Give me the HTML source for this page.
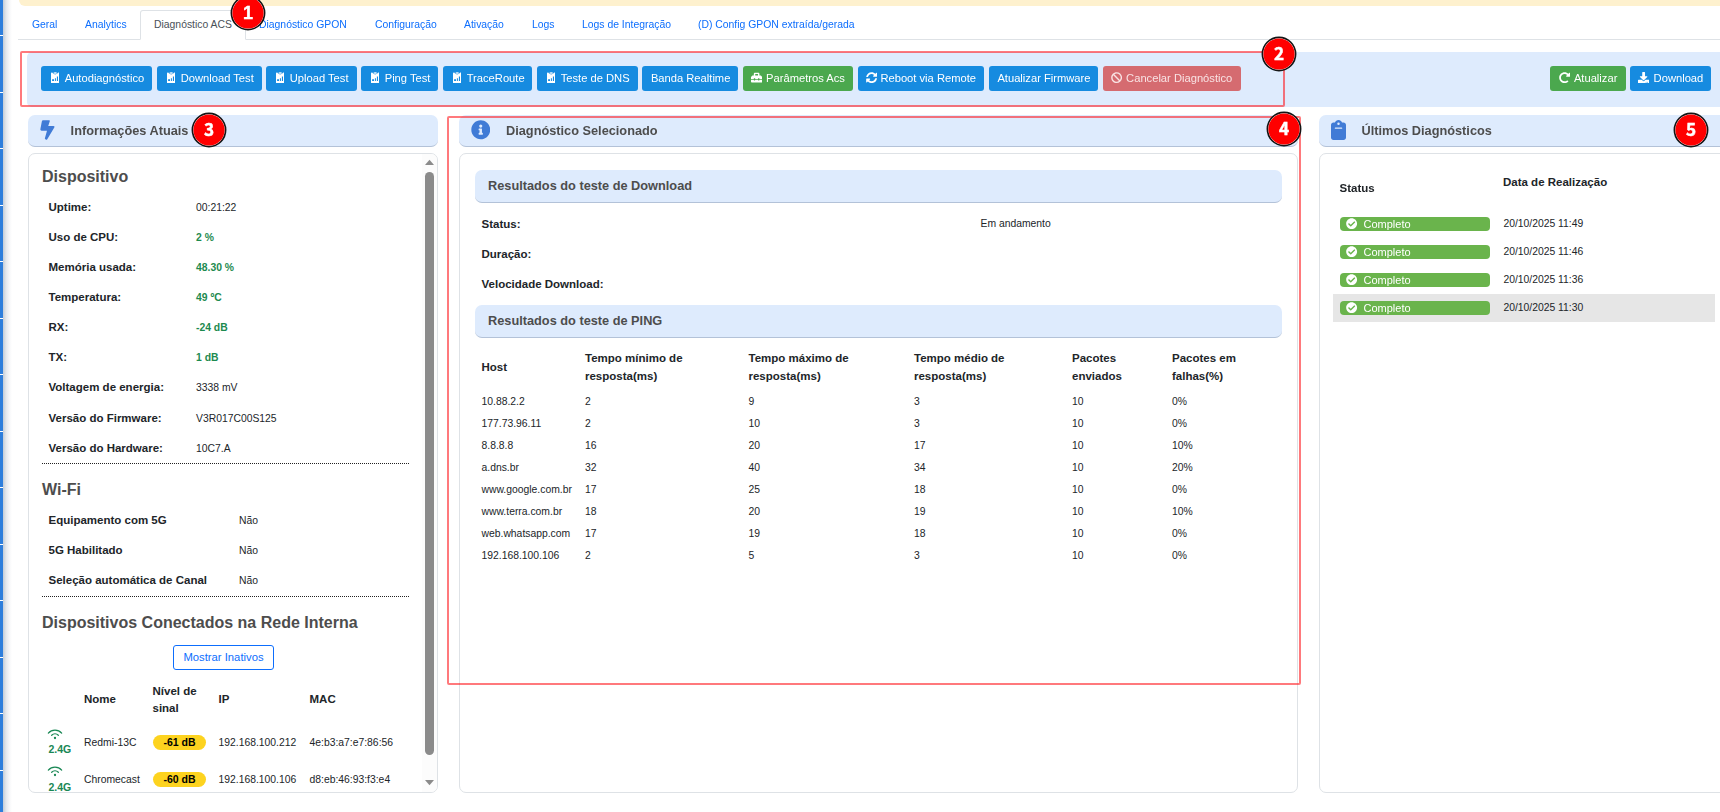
<!DOCTYPE html>
<html lang="pt-BR">
<head>
<meta charset="utf-8">
<title>Diagnóstico ACS</title>
<style>
*{box-sizing:border-box;margin:0;padding:0}
html,body{width:1720px;height:812px;overflow:hidden;background:#fff}
body{position:relative;font-family:"Liberation Sans",Arial,sans-serif;font-size:10.5px;color:#212529}
.abs{position:absolute}
.ph,.btn,.cb,.gs{will-change:transform}
/* left strip */
#strip{left:0;top:0;width:3px;height:812px;background:#2d7edc}
#strip i{position:absolute;left:0;width:3px;height:1px;background:#fff}
#stripsh{left:3px;top:0;width:9px;height:812px;background:linear-gradient(90deg,#c3ccd7 0,#e4e8ed 35%,#f6f7f9 70%,#fff 100%)}
#yellow{left:18.6px;top:0;width:1702px;height:5.6px;background:#fef1ce;border-bottom-left-radius:6px}
/* tabs */
#tabline{left:18px;top:39px;width:1702px;height:1px;background:#dee2e6}
.tab{position:absolute;top:18px;height:13px;line-height:13px;font-size:10.4px;color:#0d6efd;white-space:nowrap}
#tabact{left:140px;top:10px;width:106px;height:30px;border:1px solid #dee2e6;border-bottom:1px solid #fff;border-radius:3px 3px 0 0;background:#fff}
/* toolbar */
#toolbar{left:27px;top:52px;width:1700px;height:55px;background:#deebfd;border-radius:5px}
.btn{position:absolute;top:66px;height:25px;border-radius:3px;color:#fff;font-size:11.18px;line-height:25px;white-space:nowrap}
.btn span{position:absolute;top:0}
.btn svg{position:absolute}
.b{background:#168be0}.g{background:#4ba84e}.r{background:#d56b70;color:#f9e3e4}
.outline{border:2px solid rgba(255,20,25,.57);border-radius:2px;position:absolute}
/* number badges */
/* panel headers */
.ph{position:absolute;top:115px;height:32px;background:#deebfd;border-radius:7px;border-bottom:1.5px solid #b3c2d8;font-weight:700;font-size:12.75px;color:#4d4d4d;line-height:31px}
.ph span{position:absolute;top:0;white-space:nowrap}
.card{position:absolute;top:153px;height:640px;border:1px solid #dee2e6;border-radius:7px;background:#fff}
h4{position:absolute;font-size:16px;font-weight:700;color:#4d4d4d;line-height:20px;white-space:nowrap}
.lb{position:absolute;font-weight:700;font-size:11.5px;line-height:14px;white-space:nowrap;color:#212529}
.vl{position:absolute;margin-top:1px;font-size:10.37px;line-height:14px;white-space:nowrap;color:#212529}
.gr{color:#1d8a4f;font-weight:700}
.sh{position:absolute;left:475px;width:807px;height:33px;background:#deebfd;border-radius:7px;border-bottom:1.5px solid #b3c2d8;font-weight:700;font-size:12.75px;color:#4d4d4d;line-height:31px}
.sh span{position:absolute;left:13px;top:0;white-space:nowrap}
.cb{position:absolute;left:1340px;width:150px;height:14px;border-radius:4px;background:#6ab44c;color:#fff;font-size:11px;line-height:14px}
.cb span{position:absolute;left:23.5px;top:0}
.dot{position:absolute;left:42px;width:367px;height:0;border-top:1px dotted #222}
</style>
</head>
<body>
<div id="strip" class="abs"><i style="top:35px"></i><i style="top:92px"></i><i style="top:148px"></i><i style="top:205px"></i><i style="top:261px"></i><i style="top:318px"></i><i style="top:374px"></i><i style="top:431px"></i><i style="top:487px"></i><i style="top:544px"></i><i style="top:600px"></i><i style="top:657px"></i><i style="top:713px"></i><i style="top:770px"></i></div>
<div id="stripsh" class="abs"></div>
<div id="yellow" class="abs"></div>

<!-- tabs -->
<div id="tabline" class="abs"></div>
<div id="tabact" class="abs"></div>
<div class="tab gs" style="left:31.5px">Geral</div>
<div class="tab gs" style="left:84.5px">Analytics</div>
<div class="tab" style="left:154px;color:#495057">Diagnóstico ACS</div>
<div class="tab gs" style="left:259px">Diagnóstico GPON</div>
<div class="tab gs" style="left:374.5px">Configuração</div>
<div class="tab gs" style="left:464px">Ativação</div>
<div class="tab gs" style="left:531.5px">Logs</div>
<div class="tab gs" style="left:581.5px">Logs de Integração</div>
<div class="tab gs" style="left:698px">(D) Config GPON extraída/gerada</div>

<!-- toolbar -->
<div id="toolbar" class="abs"></div>
<div class="btn b" style="left:41px;width:111px"><svg style="left:10.00px;top:5.60px" width="8.4" height="11.4" viewBox="0 0 8.4 11.4" fill="#fff"><path fill-rule="evenodd" d="M0 1.400Q0 0.600 0.800 0.600H1.300Q1.700 2.400 4.200 2.400Q6.700 2.400 7.100 0.600H7.600Q8.400 0.600 8.400 1.400V10.600Q8.400 11.400 7.600 11.400H0.800Q0 11.400 0 10.600ZM1.100 7.300H3V9H1.100ZM3.900 6.200H4.900V9H3.900ZM5.900 4.400H7V9H5.900Z"/><ellipse cx="4.2" cy="0.950" rx="1.800" ry="0.800"/><path d="M1.500 0.900Q4.200 3.200 6.900 0.900Q6.700 2.300 4.200 2.300Q1.700 2.300 1.500 0.900Z" opacity="0.550"/></svg><span style="left:23.70px">Autodiagnóstico</span></div>
<div class="btn b" style="left:157px;width:104.5px"><svg style="left:10.00px;top:5.60px" width="8.4" height="11.4" viewBox="0 0 8.4 11.4" fill="#fff"><path fill-rule="evenodd" d="M0 1.400Q0 0.600 0.800 0.600H1.300Q1.700 2.400 4.200 2.400Q6.700 2.400 7.100 0.600H7.600Q8.400 0.600 8.400 1.400V10.600Q8.400 11.400 7.600 11.400H0.800Q0 11.400 0 10.600ZM1.100 7.300H3V9H1.100ZM3.900 6.200H4.900V9H3.900ZM5.900 4.400H7V9H5.900Z"/><ellipse cx="4.2" cy="0.950" rx="1.800" ry="0.800"/><path d="M1.500 0.900Q4.200 3.200 6.900 0.900Q6.700 2.300 4.200 2.300Q1.700 2.300 1.500 0.900Z" opacity="0.550"/></svg><span style="left:23.70px">Download Test</span></div>
<div class="btn b" style="left:266px;width:90.5px"><svg style="left:10.00px;top:5.60px" width="8.4" height="11.4" viewBox="0 0 8.4 11.4" fill="#fff"><path fill-rule="evenodd" d="M0 1.400Q0 0.600 0.800 0.600H1.300Q1.700 2.400 4.200 2.400Q6.700 2.400 7.100 0.600H7.600Q8.400 0.600 8.400 1.400V10.600Q8.400 11.400 7.600 11.400H0.800Q0 11.400 0 10.600ZM1.100 7.300H3V9H1.100ZM3.900 6.200H4.900V9H3.900ZM5.900 4.400H7V9H5.900Z"/><ellipse cx="4.2" cy="0.950" rx="1.800" ry="0.800"/><path d="M1.500 0.900Q4.200 3.200 6.900 0.900Q6.700 2.300 4.200 2.300Q1.700 2.300 1.500 0.900Z" opacity="0.550"/></svg><span style="left:23.70px">Upload Test</span></div>
<div class="btn b" style="left:361px;width:77px"><svg style="left:10.00px;top:5.60px" width="8.4" height="11.4" viewBox="0 0 8.4 11.4" fill="#fff"><path fill-rule="evenodd" d="M0 1.400Q0 0.600 0.800 0.600H1.300Q1.700 2.400 4.200 2.400Q6.700 2.400 7.100 0.600H7.600Q8.400 0.600 8.400 1.400V10.600Q8.400 11.400 7.600 11.400H0.800Q0 11.400 0 10.600ZM1.100 7.300H3V9H1.100ZM3.900 6.200H4.900V9H3.900ZM5.900 4.400H7V9H5.900Z"/><ellipse cx="4.2" cy="0.950" rx="1.800" ry="0.800"/><path d="M1.500 0.900Q4.200 3.200 6.900 0.900Q6.700 2.300 4.200 2.300Q1.700 2.300 1.500 0.900Z" opacity="0.550"/></svg><span style="left:23.70px">Ping Test</span></div>
<div class="btn b" style="left:443px;width:89px"><svg style="left:10.00px;top:5.60px" width="8.4" height="11.4" viewBox="0 0 8.4 11.4" fill="#fff"><path fill-rule="evenodd" d="M0 1.400Q0 0.600 0.800 0.600H1.300Q1.700 2.400 4.200 2.400Q6.700 2.400 7.100 0.600H7.600Q8.400 0.600 8.400 1.400V10.600Q8.400 11.400 7.600 11.400H0.800Q0 11.400 0 10.600ZM1.100 7.300H3V9H1.100ZM3.900 6.200H4.900V9H3.900ZM5.900 4.400H7V9H5.900Z"/><ellipse cx="4.2" cy="0.950" rx="1.800" ry="0.800"/><path d="M1.500 0.900Q4.200 3.200 6.900 0.900Q6.700 2.300 4.200 2.300Q1.700 2.300 1.500 0.900Z" opacity="0.550"/></svg><span style="left:23.70px">TraceRoute</span></div>
<div class="btn b" style="left:537px;width:101px"><svg style="left:10.00px;top:5.60px" width="8.4" height="11.4" viewBox="0 0 8.4 11.4" fill="#fff"><path fill-rule="evenodd" d="M0 1.400Q0 0.600 0.800 0.600H1.300Q1.700 2.400 4.200 2.400Q6.700 2.400 7.100 0.600H7.600Q8.400 0.600 8.400 1.400V10.600Q8.400 11.400 7.600 11.400H0.800Q0 11.400 0 10.600ZM1.100 7.300H3V9H1.100ZM3.900 6.200H4.900V9H3.900ZM5.900 4.400H7V9H5.900Z"/><ellipse cx="4.2" cy="0.950" rx="1.800" ry="0.800"/><path d="M1.500 0.900Q4.200 3.200 6.900 0.900Q6.700 2.300 4.200 2.300Q1.700 2.300 1.500 0.900Z" opacity="0.550"/></svg><span style="left:23.70px">Teste de DNS</span></div>
<div class="btn b" style="left:642px;width:96px"><span style="left:8.90px">Banda Realtime</span></div>
<div class="btn g" style="left:743px;width:110px"><svg style="left:7.50px;top:6.00px" width="11.25" height="11.25" viewBox="0 0 512 512" fill="#fff"><path d="M502.63 214.63l-45.250-45.250c-6-6-14.140-9.370-22.630-9.370H384V80c0-26.510-21.490-48-48-48H176c-26.510 0-48 21.490-48 48v80H77.250c-8.490 0-16.620 3.370-22.630 9.370L9.370 214.630c-6 6-9.370 14.140-9.370 22.630V320h128v-16c0-8.840 7.160-16 16-16h32c8.840 0 16 7.160 16 16v16h128v-16c0-8.840 7.160-16 16-16h32c8.840 0 16 7.160 16 16v16h128v-82.750c0-8.480-3.370-16.620-9.370-22.620zM320 160H192V96h128v64zm64 208c0 8.840-7.160 16-16 16h-32c-8.840 0-16-7.160-16-16v-16H192v16c0 8.840-7.160 16-16 16h-32c-8.840 0-16-7.160-16-16v-16H0v96c0 17.670 14.330 32 32 32h448c17.670 0 32-14.330 32-32v-96H384v16z"/></svg><span style="left:23.10px">Parâmetros Acs</span></div>
<div class="btn b" style="left:858px;width:126px"><svg style="left:7.70px;top:5.90px" width="11.25" height="11.25" viewBox="0 0 512 512" fill="#fff"><path d="M370.72 133.28C339.458 104.008 298.888 87.962 255.848 88c-77.458.068-144.328 53.178-162.791 126.850-1.344 5.363-6.122 9.150-11.651 9.150H24.103c-7.498 0-13.194-6.807-11.807-14.176C33.933 94.924 134.813 8 256 8c66.448 0 126.791 26.136 171.315 68.685L463.030 40.970C478.149 25.851 504 36.559 504 57.941V192c0 13.255-10.745 24-24 24H345.941c-21.382 0-32.090-25.851-16.971-40.971l41.750-41.749zM32 296h134.059c21.382 0 32.090 25.851 16.971 40.971l-41.750 41.750c31.262 29.273 71.835 45.319 114.876 45.280 77.418-.070 144.315-53.144 162.787-126.849 1.344-5.363 6.122-9.150 11.651-9.150h57.304c7.498 0 13.194 6.807 11.807 14.176C478.067 417.076 377.187 504 256 504c-66.448 0-126.791-26.136-171.315-68.685L48.970 471.030C33.851 486.149 8 475.441 8 454.059V320c0-13.255 10.745-24 24-24z"/></svg><span style="left:22.40px">Reboot via Remote</span></div>
<div class="btn b" style="left:989px;width:109px"><span style="left:8.40px">Atualizar Firmware</span></div>
<div class="btn r" style="left:1103px;width:138px"><svg style="left:7.50px;top:6.30px" width="11.25" height="11.25" viewBox="0 0 512 512" fill="#f9e3e4"><path d="M256 8C119.034 8 8 119.033 8 256s111.034 248 248 248 248-111.034 248-248S392.967 8 256 8zm130.108 117.892c65.448 65.448 70 165.481 20.677 235.637L150.470 105.216c70.204-49.356 170.226-44.735 235.638 20.676zM125.892 386.108c-65.448-65.448-70-165.481-20.677-235.637L361.530 406.784c-70.203 49.356-170.226 44.736-235.638-20.676z"/></svg><span style="left:23.10px">Cancelar Diagnóstico</span></div>
<div class="btn g" style="left:1550px;width:75.7px"><svg style="left:8.70px;top:6.30px" width="11.25" height="11.25" viewBox="0 0 512 512" fill="#fff"><path d="M256.455 8c66.269.119 126.437 26.233 170.859 68.685l35.715-35.715C478.149 25.851 504 36.559 504 57.941V192c0 13.255-10.745 24-24 24H345.941c-21.382 0-32.090-25.851-16.971-40.971l41.750-41.750c-30.864-28.899-70.801-44.907-113.230-45.273-92.398-.798-170.283 73.977-169.484 169.442C88.764 348.009 162.184 424 256 424c41.127 0 79.997-14.678 110.629-41.556 4.743-4.161 11.906-3.908 16.368.553l39.662 39.662c4.872 4.872 4.631 12.815-.482 17.433C378.202 479.813 319.926 504 256 504 119.034 504 8.001 392.967 8 256.002 7.999 119.193 119.646 7.755 256.455 8z"/></svg><span style="left:23.90px">Atualizar</span></div>
<div class="btn b" style="left:1630px;width:81px"><svg style="left:8.00px;top:6.00px" width="11.25" height="11.25" viewBox="0 0 512 512" fill="#fff"><path d="M216 0h80c13.300 0 24 10.700 24 24v168h87.700c17.800 0 26.700 21.500 14.100 34.100L269.700 378.300c-7.500 7.500-19.800 7.500-27.300 0L90.100 226.100c-12.600-12.600-3.700-34.100 14.100-34.100H192V24c0-13.300 10.700-24 24-24zm296 376v112c0 13.300-10.700 24-24 24H24c-13.300 0-24-10.700-24-24V376c0-13.300 10.700-24 24-24h146.700l49 49c20.100 20.100 52.500 20.100 72.600 0l49-49H488c13.300 0 24 10.700 24 24zm-124 88c0-11-9-20-20-20s-20 9-20 20 9 20 20 20 20-9 20-20zm64 0c0-11-9-20-20-20s-20 9-20 20 9 20 20 20 20-9 20-20z"/></svg><span style="left:23.60px">Download</span></div>

<!-- panel headers -->
<div class="ph" style="left:28px;width:410px"><span style="left:42.6px">Informações Atuais</span></div>
<div class="ph" style="left:459px;width:839px"><span style="left:47px">Diagnóstico Selecionado</span></div>
<div class="ph" style="left:1319px;width:420px"><span style="left:42.5px">Últimos Diagnósticos</span></div>

<!-- cards -->
<div class="card" id="c1" style="left:28px;width:410px"></div>
<div class="card" id="c2" style="left:459px;width:839px;height:640px"></div>
<div class="card" id="c3" style="left:1319px;width:420px;height:640px"></div>

<div class="abs" style="left:29px;top:154px;width:408px;height:638px;overflow:hidden"><div class="abs" style="left:-29px;top:-154px;width:0;height:0">
<h4 style="left:42px;top:167px">Dispositivo</h4>
<div class="lb" style="left:48.5px;top:200px">Uptime:</div>
<div class="vl" style="left:196px;top:200px">00:21:22</div>
<div class="lb" style="left:48.5px;top:230px">Uso de CPU:</div>
<div class="vl gr" style="left:196px;top:230px">2 %</div>
<div class="lb" style="left:48.5px;top:260px">Memória usada:</div>
<div class="vl gr" style="left:196px;top:260px">48.30 %</div>
<div class="lb" style="left:48.5px;top:290px">Temperatura:</div>
<div class="vl gr" style="left:196px;top:290px">49 ºC</div>
<div class="lb" style="left:48.5px;top:320px">RX:</div>
<div class="vl gr" style="left:196px;top:320px">-24 dB</div>
<div class="lb" style="left:48.5px;top:350px">TX:</div>
<div class="vl gr" style="left:196px;top:350px">1 dB</div>
<div class="lb" style="left:48.5px;top:380px">Voltagem de energia:</div>
<div class="vl" style="left:196px;top:380px">3338 mV</div>
<div class="lb" style="left:48.5px;top:411px">Versão do Firmware:</div>
<div class="vl" style="left:196px;top:411px">V3R017C00S125</div>
<div class="lb" style="left:48.5px;top:441px">Versão do Hardware:</div>
<div class="vl" style="left:196px;top:441px">10C7.A</div>
<div class="dot" style="top:463px"></div>
<h4 style="left:42px;top:480px">Wi-Fi</h4>
<div class="lb" style="left:48.5px;top:513px">Equipamento com 5G</div>
<div class="vl" style="left:239px;top:513px">Não</div>
<div class="lb" style="left:48.5px;top:543px">5G Habilitado</div>
<div class="vl" style="left:239px;top:543px">Não</div>
<div class="lb" style="left:48.5px;top:573px">Seleção automática de Canal</div>
<div class="vl" style="left:239px;top:573px">Não</div>
<div class="dot" style="top:596px"></div>
<h4 style="left:42px;top:613px">Dispositivos Conectados na Rede Interna</h4>
<div class="abs" style="left:173px;top:645px;width:101px;height:25px;border:1px solid #0d6efd;border-radius:3px;color:#0d6efd;font-size:11.25px;line-height:23px;text-align:center">Mostrar Inativos</div>
<div class="lb" style="left:84px;top:692px">Nome</div>
<div class="lb" style="left:152.5px;top:682.5px;line-height:17px">Nível de<br>sinal</div>
<div class="lb" style="left:218.5px;top:692px">IP</div>
<div class="lb" style="left:309.5px;top:692px">MAC</div>
<svg class="abs" style="left:47.1px;top:727.8px" width="16" height="12" viewBox="0 0 16 12" fill="#198754" stroke="#198754"><path d="M1.34 5.11A8.7 8.7 0 0 1 14.66 5.11" fill="none" stroke-width="1.25" stroke-linecap="round"/><path d="M4.67 7.25A4.8 4.8 0 0 1 11.33 7.25" fill="none" stroke-width="1.25" stroke-linecap="round"/><circle cx="8" cy="10" r="1.15" stroke="none"/></svg>
<div class="lb" style="left:48.5px;top:742.1999999999999px;color:#198754;font-size:10.5px">2.4G</div>
<div class="vl" style="left:84px;top:734.8px">Redmi-13C</div>
<div class="abs" style="left:153px;top:735.0px;width:53px;height:15px;border-radius:8px;background:#fdd31f;color:#000;font-weight:700;font-size:10.5px;line-height:15px;text-align:center">-61 dB</div>
<div class="vl" style="left:218.5px;top:734.8px">192.168.100.212</div>
<div class="vl" style="left:309.5px;top:734.8px">4e:b3:a7:e7:86:56</div>
<svg class="abs" style="left:47.1px;top:764.8px" width="16" height="12" viewBox="0 0 16 12" fill="#198754" stroke="#198754"><path d="M1.34 5.11A8.7 8.7 0 0 1 14.66 5.11" fill="none" stroke-width="1.25" stroke-linecap="round"/><path d="M4.67 7.25A4.8 4.8 0 0 1 11.33 7.25" fill="none" stroke-width="1.25" stroke-linecap="round"/><circle cx="8" cy="10" r="1.15" stroke="none"/></svg>
<div class="lb" style="left:48.5px;top:780.1999999999999px;color:#198754;font-size:10.5px">2.4G</div>
<div class="vl" style="left:84px;top:771.8px">Chromecast</div>
<div class="abs" style="left:153px;top:772.0px;width:53px;height:15px;border-radius:8px;background:#fdd31f;color:#000;font-weight:700;font-size:10.5px;line-height:15px;text-align:center">-60 dB</div>
<div class="vl" style="left:218.5px;top:771.8px">192.168.100.106</div>
<div class="vl" style="left:309.5px;top:771.8px">d8:eb:46:93:f3:e4</div>
</div></div>
<svg class="abs" style="left:40.2px;top:119.8px" width="15.9" height="20.2" viewBox="0 0 16 21" fill="#407bd6" ><path d="M2.900 0.300H9.200Q10.300 0.300 9.900 1.300L8.300 6.200H13.600Q15.400 6.300 14.600 7.900L7.300 19.900Q6.500 20.900 5.300 20.100Q4.600 19.500 4.900 18.700L7 11.100H1.400Q-0.100 11 0.100 9.600L1.700 1.200Q1.900 0.300 2.900 0.300z"/></svg>
<svg class="abs" style="left:470.8px;top:120.0px" width="19.5" height="19.5" viewBox="0 0 512 512" fill="#407bd6" ><path d="M256 8C119.043 8 8 119.083 8 256c0 136.997 111.043 248 248 248s248-111.003 248-248C504 119.083 392.957 8 256 8zm0 110c23.196 0 42 18.804 42 42s-18.804 42-42 42-42-18.804-42-42 18.804-42 42-42zm56 254c0 6.627-5.373 12-12 12h-88c-6.627 0-12-5.373-12-12v-24c0-6.627 5.373-12 12-12h12v-64h-12c-6.627 0-12-5.373-12-12v-24c0-6.627 5.373-12 12-12h64c6.627 0 12 5.373 12 12v100h12c6.627 0 12 5.373 12 12v24z"/></svg>
<div class="sh" style="top:170px"><span>Resultados do teste de Download</span></div>
<div class="lb" style="left:481.5px;top:217px">Status:</div>
<div class="lb" style="left:481.5px;top:247px">Duração:</div>
<div class="lb" style="left:481.5px;top:277px">Velocidade Download:</div>
<div class="vl" style="left:980.5px;top:216px">Em andamento</div>
<div class="sh" style="top:305px"><span>Resultados do teste de PING</span></div>
<div class="lb" style="left:481.5px;top:360px">Host</div>
<div class="lb" style="left:585px;top:349px;line-height:18px">Tempo mínimo de<br>resposta(ms)</div>
<div class="lb" style="left:748.5px;top:349px;line-height:18px">Tempo máximo de<br>resposta(ms)</div>
<div class="lb" style="left:914px;top:349px;line-height:18px">Tempo médio de<br>resposta(ms)</div>
<div class="lb" style="left:1072px;top:349px;line-height:18px">Pacotes<br>enviados</div>
<div class="lb" style="left:1172px;top:349px;line-height:18px">Pacotes em<br>falhas(%)</div>
<div class="vl" style="left:481.5px;top:394px">10.88.2.2</div>
<div class="vl" style="left:585px;top:394px">2</div>
<div class="vl" style="left:748.5px;top:394px">9</div>
<div class="vl" style="left:914px;top:394px">3</div>
<div class="vl" style="left:1072px;top:394px">10</div>
<div class="vl" style="left:1172px;top:394px">0%</div>
<div class="vl" style="left:481.5px;top:416px">177.73.96.11</div>
<div class="vl" style="left:585px;top:416px">2</div>
<div class="vl" style="left:748.5px;top:416px">10</div>
<div class="vl" style="left:914px;top:416px">3</div>
<div class="vl" style="left:1072px;top:416px">10</div>
<div class="vl" style="left:1172px;top:416px">0%</div>
<div class="vl" style="left:481.5px;top:438px">8.8.8.8</div>
<div class="vl" style="left:585px;top:438px">16</div>
<div class="vl" style="left:748.5px;top:438px">20</div>
<div class="vl" style="left:914px;top:438px">17</div>
<div class="vl" style="left:1072px;top:438px">10</div>
<div class="vl" style="left:1172px;top:438px">10%</div>
<div class="vl" style="left:481.5px;top:460px">a.dns.br</div>
<div class="vl" style="left:585px;top:460px">32</div>
<div class="vl" style="left:748.5px;top:460px">40</div>
<div class="vl" style="left:914px;top:460px">34</div>
<div class="vl" style="left:1072px;top:460px">10</div>
<div class="vl" style="left:1172px;top:460px">20%</div>
<div class="vl" style="left:481.5px;top:482px">www.google.com.br</div>
<div class="vl" style="left:585px;top:482px">17</div>
<div class="vl" style="left:748.5px;top:482px">25</div>
<div class="vl" style="left:914px;top:482px">18</div>
<div class="vl" style="left:1072px;top:482px">10</div>
<div class="vl" style="left:1172px;top:482px">0%</div>
<div class="vl" style="left:481.5px;top:504px">www.terra.com.br</div>
<div class="vl" style="left:585px;top:504px">18</div>
<div class="vl" style="left:748.5px;top:504px">20</div>
<div class="vl" style="left:914px;top:504px">19</div>
<div class="vl" style="left:1072px;top:504px">10</div>
<div class="vl" style="left:1172px;top:504px">10%</div>
<div class="vl" style="left:481.5px;top:526px">web.whatsapp.com</div>
<div class="vl" style="left:585px;top:526px">17</div>
<div class="vl" style="left:748.5px;top:526px">19</div>
<div class="vl" style="left:914px;top:526px">18</div>
<div class="vl" style="left:1072px;top:526px">10</div>
<div class="vl" style="left:1172px;top:526px">0%</div>
<div class="vl" style="left:481.5px;top:548px">192.168.100.106</div>
<div class="vl" style="left:585px;top:548px">2</div>
<div class="vl" style="left:748.5px;top:548px">5</div>
<div class="vl" style="left:914px;top:548px">3</div>
<div class="vl" style="left:1072px;top:548px">10</div>
<div class="vl" style="left:1172px;top:548px">0%</div>
<div class="abs" style="left:422px;top:154px;width:15px;height:638px;background:#fcfcfc;border-top-right-radius:6px;border-bottom-right-radius:6px"></div>
<div class="abs" style="left:425px;top:172px;width:9px;height:583px;border-radius:4.5px;background:#8b8b8b"></div>
<svg class="abs" style="left:424px;top:158px" width="11" height="9" viewBox="0 0 11 9"><path d="M1 7L5.500 1.800L10 7z" fill="#8b8b8b"/></svg>
<svg class="abs" style="left:424px;top:778px" width="11" height="9" viewBox="0 0 11 9"><path d="M1 2L5.500 7.200L10 2z" fill="#8b8b8b"/></svg>

<svg class="abs" style="left:1331.2px;top:119.8px" width="15" height="20" viewBox="0 0 384 512" fill="#407bd6" ><path d="M192 0c-41.800 0-77.400 26.700-90.500 64H64C28.700 64 0 92.700 0 128V448c0 35.300 28.700 64 64 64H320c35.300 0 64-28.700 64-64V128c0-35.300-28.700-64-64-64H282.500C269.400 26.700 233.800 0 192 0zm0 64a32 32 0 1 1 0 64 32 32 0 1 1 0-64zM112 192H272c8.800 0 16 7.200 16 16s-7.200 16-16 16H112c-8.800 0-16-7.200-16-16s7.200-16 16-16z"/></svg>
<div class="lb" style="left:1339.5px;top:181px">Status</div>
<div class="lb" style="left:1503px;top:175px">Data de Realização</div>
<div class="abs" style="left:1333px;top:294px;width:382px;height:28px;background:#e6e6e6"></div>
<div class="cb" style="top:217px"><svg style="position:absolute;left:6.3px;top:1.4px" width="11.25" height="11.25" viewBox="0 0 512 512" fill="#fff"><path d="M504 256c0 136.967-111.033 248-248 248S8 392.967 8 256 119.033 8 256 8s248 111.033 248 248zM227.314 387.314l184-184c6.248-6.248 6.248-16.379 0-22.627l-22.627-22.627c-6.248-6.249-16.379-6.249-22.628 0L216 308.118l-70.059-70.059c-6.248-6.248-16.379-6.248-22.628 0l-22.627 22.627c-6.248 6.248-6.248 16.379 0 22.627l104 104c6.249 6.249 16.379 6.249 22.628.001z"/></svg><span>Completo</span></div>
<div class="vl" style="left:1503.4px;top:216px">20/10/2025 11:49</div>
<div class="cb" style="top:245px"><svg style="position:absolute;left:6.3px;top:1.4px" width="11.25" height="11.25" viewBox="0 0 512 512" fill="#fff"><path d="M504 256c0 136.967-111.033 248-248 248S8 392.967 8 256 119.033 8 256 8s248 111.033 248 248zM227.314 387.314l184-184c6.248-6.248 6.248-16.379 0-22.627l-22.627-22.627c-6.248-6.249-16.379-6.249-22.628 0L216 308.118l-70.059-70.059c-6.248-6.248-16.379-6.248-22.628 0l-22.627 22.627c-6.248 6.248-6.248 16.379 0 22.627l104 104c6.249 6.249 16.379 6.249 22.628.001z"/></svg><span>Completo</span></div>
<div class="vl" style="left:1503.4px;top:244px">20/10/2025 11:46</div>
<div class="cb" style="top:273px"><svg style="position:absolute;left:6.3px;top:1.4px" width="11.25" height="11.25" viewBox="0 0 512 512" fill="#fff"><path d="M504 256c0 136.967-111.033 248-248 248S8 392.967 8 256 119.033 8 256 8s248 111.033 248 248zM227.314 387.314l184-184c6.248-6.248 6.248-16.379 0-22.627l-22.627-22.627c-6.248-6.249-16.379-6.249-22.628 0L216 308.118l-70.059-70.059c-6.248-6.248-16.379-6.248-22.628 0l-22.627 22.627c-6.248 6.248-6.248 16.379 0 22.627l104 104c6.249 6.249 16.379 6.249 22.628.001z"/></svg><span>Completo</span></div>
<div class="vl" style="left:1503.4px;top:272px">20/10/2025 11:36</div>
<div class="cb" style="top:301px"><svg style="position:absolute;left:6.3px;top:1.4px" width="11.25" height="11.25" viewBox="0 0 512 512" fill="#fff"><path d="M504 256c0 136.967-111.033 248-248 248S8 392.967 8 256 119.033 8 256 8s248 111.033 248 248zM227.314 387.314l184-184c6.248-6.248 6.248-16.379 0-22.627l-22.627-22.627c-6.248-6.249-16.379-6.249-22.628 0L216 308.118l-70.059-70.059c-6.248-6.248-16.379-6.248-22.628 0l-22.627 22.627c-6.248 6.248-6.248 16.379 0 22.627l104 104c6.249 6.249 16.379 6.249 22.628.001z"/></svg><span>Completo</span></div>
<div class="vl" style="left:1503.4px;top:300px">20/10/2025 11:30</div>

<!-- outlines + badges -->
<div class="outline" style="left:20px;top:51px;width:1265px;height:56px"></div>
<div class="outline" style="left:447px;top:116px;width:854px;height:569px"></div>
<svg class="abs" style="left:228.00px;top:-7.30px" width="40" height="40" viewBox="0 0 40 40"><circle cx="20" cy="20" r="16.6" fill="#fff" stroke="#151515" stroke-width="1.7"/><circle cx="20" cy="20" r="15.6" fill="#ff0000"/><text x="20" y="26.4" text-anchor="middle" fill="#fff" stroke="#fff" stroke-width="0.45" font-weight="700" font-family="Liberation Sans, sans-serif" font-size="18">1</text></svg>
<svg class="abs" style="left:1258.80px;top:33.90px" width="40" height="40" viewBox="0 0 40 40"><circle cx="20" cy="20" r="16.6" fill="#fff" stroke="#151515" stroke-width="1.7"/><circle cx="20" cy="20" r="15.6" fill="#ff0000"/><text x="20" y="26.2" text-anchor="middle" fill="#fff" stroke="#fff" stroke-width="0.45" font-weight="700" font-family="Noto Sans CJK SC, Liberation Sans, sans-serif" font-size="17.2">2</text></svg>
<svg class="abs" style="left:189.10px;top:109.80px" width="40" height="40" viewBox="0 0 40 40"><circle cx="20" cy="20" r="16.6" fill="#fff" stroke="#151515" stroke-width="1.7"/><circle cx="20" cy="20" r="15.6" fill="#ff0000"/><text x="20" y="26.2" text-anchor="middle" fill="#fff" stroke="#fff" stroke-width="0.45" font-weight="700" font-family="Noto Sans CJK SC, Liberation Sans, sans-serif" font-size="17.2">3</text></svg>
<svg class="abs" style="left:1264.05px;top:108.70px" width="40" height="40" viewBox="0 0 40 40"><circle cx="20" cy="20" r="16.6" fill="#fff" stroke="#151515" stroke-width="1.7"/><circle cx="20" cy="20" r="15.6" fill="#ff0000"/><text x="20" y="26.2" text-anchor="middle" fill="#fff" stroke="#fff" stroke-width="0.45" font-weight="700" font-family="Noto Sans CJK SC, Liberation Sans, sans-serif" font-size="17.2">4</text></svg>
<svg class="abs" style="left:1671.05px;top:109.70px" width="40" height="40" viewBox="0 0 40 40"><circle cx="20" cy="20" r="16.6" fill="#fff" stroke="#151515" stroke-width="1.7"/><circle cx="20" cy="20" r="15.6" fill="#ff0000"/><text x="20" y="26.2" text-anchor="middle" fill="#fff" stroke="#fff" stroke-width="0.45" font-weight="700" font-family="Noto Sans CJK SC, Liberation Sans, sans-serif" font-size="17.2">5</text></svg>
</body>
</html>
